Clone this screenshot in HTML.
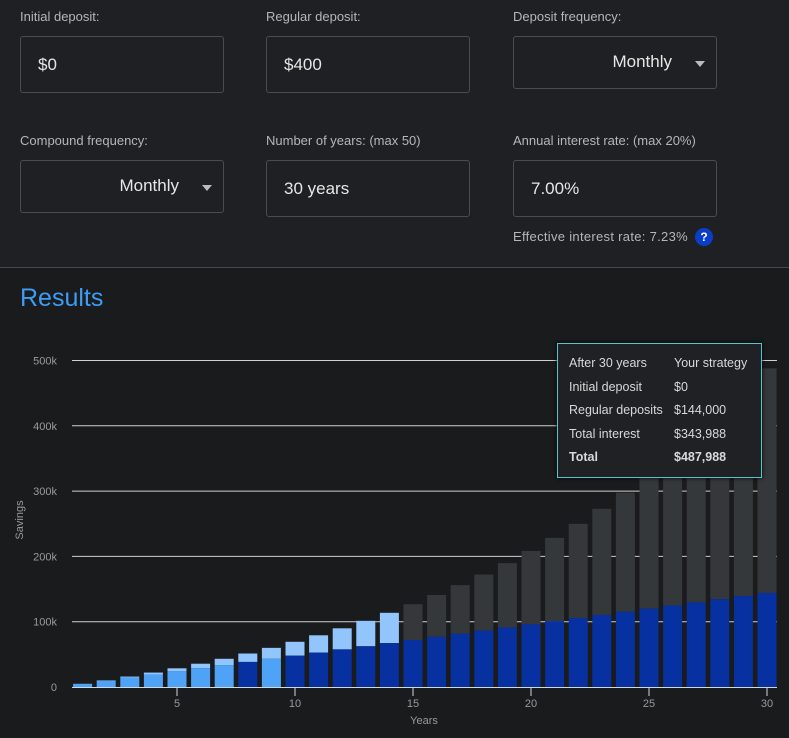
<!DOCTYPE html>
<html><head><meta charset="utf-8"><style>
html,body{margin:0;padding:0;width:789px;height:738px;overflow:hidden;background:#1f2023;font-family:"Liberation Sans",sans-serif;}
.top{position:absolute;left:0;top:0;width:789px;height:267px;background:#1f2023;border-bottom:1px solid #46484b;}
.lbl{position:absolute;font-size:13px;color:#b4b6b8;}
.box{position:absolute;border:1px solid #4a4c50;border-radius:3px;background:#1f2023;color:#e6e6e6;font-size:17px;box-sizing:border-box;}
.inp{height:57px;width:204px;padding:18px 0 0 17px;}
.sel{height:53px;width:204px;text-align:right;padding:15px 44px 0 0;}
.sel:after{content:"";position:absolute;right:11px;top:24px;border-left:5px solid transparent;border-right:5px solid transparent;border-top:6px solid #bbb;}
.bot{position:absolute;left:0;top:268px;width:789px;height:470px;background:#1a1b1d;}
</style></head><body>
<div class="top">
<div class="lbl" style="left:20px;top:9px">Initial deposit:</div>
<div class="lbl" style="left:266px;top:9px">Regular deposit:</div>
<div class="lbl" style="left:513px;top:9px">Deposit frequency:</div>
<div class="box inp" style="left:20px;top:36px">$0</div>
<div class="box inp" style="left:266px;top:36px">$400</div>
<div class="box sel" style="left:513px;top:36px">Monthly</div>
<div class="lbl" style="left:20px;top:133px">Compound frequency:</div>
<div class="lbl" style="left:266px;top:133px">Number of years: (max 50)</div>
<div class="lbl" style="left:513px;top:133px">Annual interest rate: (max 20%)</div>
<div class="box sel" style="left:20px;top:160px">Monthly</div>
<div class="box inp" style="left:266px;top:160px">30 years</div>
<div class="box inp" style="left:513px;top:160px">7.00%</div>
<div class="lbl" style="left:513px;top:229px;letter-spacing:0.3px">Effective interest rate: 7.23%</div>
<div style="position:absolute;left:695px;top:228px;width:18px;height:18px;border-radius:9px;background:#0a3ec9;color:#fff;font-size:12px;font-weight:bold;text-align:center;line-height:18px">?</div>
</div>
<div class="bot"></div>
<div style="position:absolute;left:20px;top:284px;font-size:25px;color:#3d9cf5">Results</div>
<svg id="ch" width="789" height="738" style="position:absolute;left:0;top:0" xmlns="http://www.w3.org/2000/svg"></svg>
<div style="position:absolute;left:557px;top:343px;width:203px;height:133px;border:1px solid #56c6cc;background:#1f2124;box-shadow:0 0 4px #000;font-size:12.5px;color:#d8d8d8;">
<div style="position:absolute;left:11px;top:8px;line-height:23.5px">After 30 years<br>Initial deposit<br>Regular deposits<br>Total interest<br><b>Total</b></div>
<div style="position:absolute;left:116px;top:8px;line-height:23.5px">Your strategy<br>$0<br>$144,000<br>$343,988<br><b>$487,988</b></div>
</div>
<script>
var s='',ns='';
var y0=687,k=0.653;
for(var g=1;g<=5;g++){var y=y0-g*100*k;s+='<line x1="72" x2="777" y1="'+y+'" y2="'+y+'" stroke="#d0d0d0" stroke-width="1"/>';s+='<text x="57" y="'+(y+4)+'" fill="#9a9a9a" font-size="11" text-anchor="end" font-family="Liberation Sans">'+(g*100)+'k</text>';}
s+='<text x="57" y="691" fill="#9a9a9a" font-size="11" text-anchor="end" font-family="Liberation Sans">0</text>';
var r=0.07/12;
for(var n=1;n<=30;n++){
var tot=400*(Math.pow(1+r,12*n)-1)/r, dep=4800*n;
var cx=82.6+(n-1)*23.6, x=cx-9.5;
var yd=y0-dep/1000*k, yt=y0-tot/1000*k;
var bc=(n<=7||n==9)?'#4fa3f7':'#0731a0';
var tc=(n<=14)?'#93c5fd':'#35383b';
s+='<rect x="'+x+'" y="'+yt+'" width="19" height="'+(yd-yt)+'" fill="'+tc+'"/>';
s+='<rect x="'+x+'" y="'+yd+'" width="19" height="'+(y0-yd)+'" fill="'+bc+'"/>';
}
s+='<line x1="72" x2="777" y1="687.5" y2="687.5" stroke="#d0d8e8" stroke-width="1"/>';
[5,10,15,20,25,30].forEach(function(t){var cx=82.6+(t-1)*23.6;s+='<line x1="'+cx+'" x2="'+cx+'" y1="687" y2="696" stroke="#d0d8e8"/><text x="'+cx+'" y="707" fill="#9a9a9a" font-size="11" text-anchor="middle" font-family="Liberation Sans">'+t+'</text>';});
s+='<text x="424" y="724" fill="#9a9a9a" font-size="11" text-anchor="middle" font-family="Liberation Sans">Years</text>';
s+='<text x="0" y="0" transform="translate(23,520) rotate(-90)" fill="#9a9a9a" font-size="11" text-anchor="middle" font-family="Liberation Sans">Savings</text>';
document.getElementById('ch').innerHTML=s;
</script>
</body></html>
